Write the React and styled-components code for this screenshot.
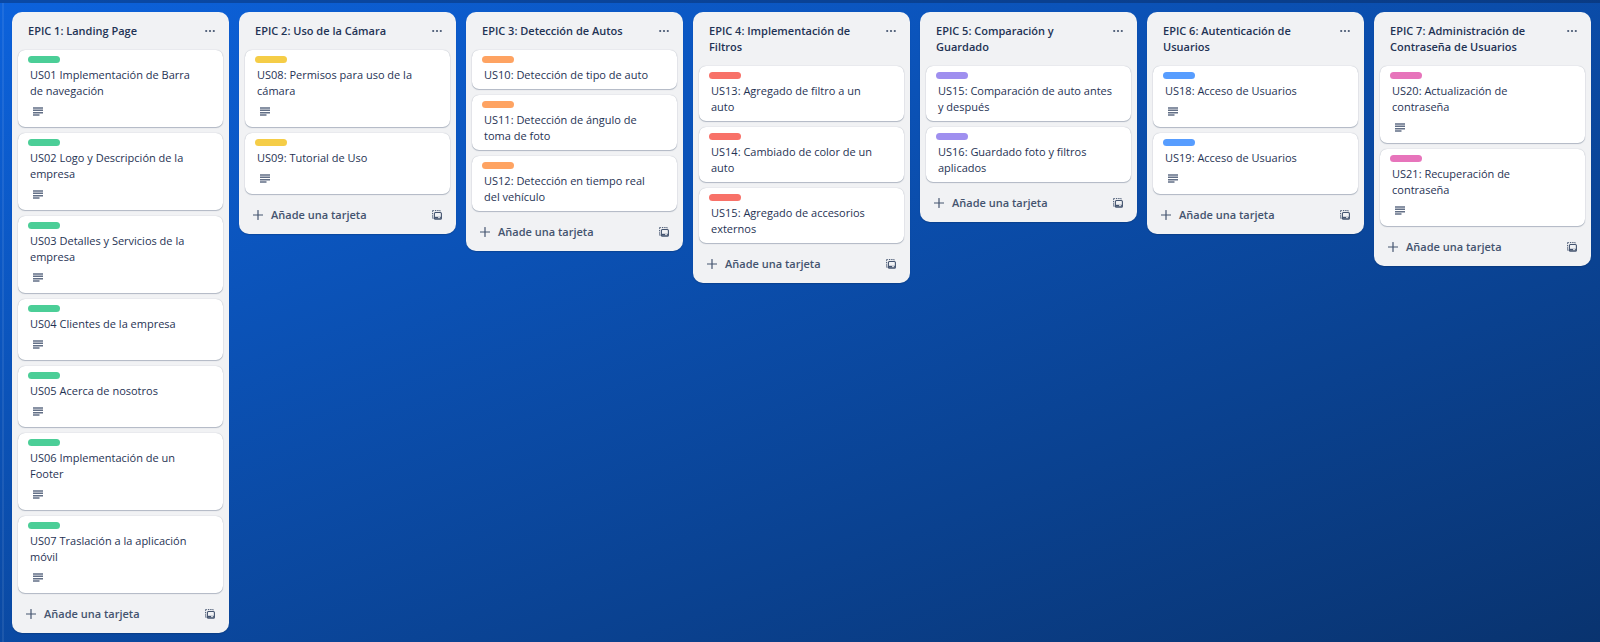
import React from "react";
import styled, { createGlobalStyle } from "styled-components";

const GlobalStyle = createGlobalStyle`
  *, *::before, *::after { box-sizing: border-box; }
  html { height: 100%; }
  body {
    margin: 0;
    min-height: 100%;
    font-family: "Open Sans", "Noto Sans", sans-serif;
    font-size: 11px;
    line-height: 16px;
    color: #1f3354;
    background: linear-gradient(160deg, #0c62dc 0%, #09326c 103%) no-repeat #09326c;
  }
  h2, h3, ul { margin: 0; padding: 0; font: inherit; }
  ul { list-style: none; }
`;

const Page = styled.div`
  display: flex;
  flex-direction: column;
  min-height: 100vh;
`;

const TopEdge = styled.div`
  height: 3px;
  background: rgba(9, 30, 66, 0.35);
`;

const Board = styled.main`
  flex: 1;
  margin-left: 2px;
  padding: 9px 9px 9px 8px;
  border-left: 2px solid rgba(255, 255, 255, 0.08);
`;

const Lists = styled.div`
  display: grid;
  grid-template-columns: repeat(7, minmax(200px, 1fr));
  align-items: start;
  gap: 10px;
`;

const List = styled.section`
  padding: 0 6px;
  border-radius: 10px;
  background: #f1f2f4;
  box-shadow: 0 1px 1px rgba(9, 30, 66, 0.25);
`;

const ListHeader = styled.header`
  display: flex;
  align-items: flex-start;
  justify-content: space-between;
  gap: 8px;
  padding: 11px 1px 11px 10px;
`;

const ListTitle = styled.h2`
  flex: 1;
  && { font-weight: 600; }
`;

const IconButton = styled.button`
  display: grid;
  place-items: center;
  width: 24px;
  height: 16px;
  padding: 0;
  border: 0;
  background: none;
  color: #44546f;
  cursor: pointer;
`;

const Cards = styled.ul`
  display: flex;
  flex-direction: column;
  gap: 6px;
`;

const Card = styled.li`
  padding: 6px 10px;
  border-radius: 7px;
  background: #fff;
  box-shadow: 0 1px 1px rgba(9, 30, 66, 0.25), 0 0 1px rgba(9, 30, 66, 0.31);
`;

const Label = styled.div`
  width: 32px;
  height: 7px;
  margin-bottom: 4px;
  border-radius: 4px;
  background: ${(p) => p.$color};
`;

const CardTitle = styled.h3`
  white-space: pre-line;
  && { padding: 0 5px 0 2px; }
`;

const Badge = styled.div`
  display: flex;
  align-items: center;
  height: 16px;
  margin: 4px 0 2px;
  padding-left: 5px;
  color: #626f86;
`;

const ListFooter = styled.footer`
  display: flex;
  align-items: center;
  justify-content: space-between;
  height: 40px;
  padding: 2px 1px 0 8px;
`;

const AddButton = styled.button`
  display: flex;
  align-items: center;
  gap: 8px;
  padding: 0;
  border: 0;
  background: none;
  color: #44546f;
  font: inherit;
  font-weight: 600;
  cursor: pointer;
`;

const DotsIcon = () => (
  <svg width="10" height="4" viewBox="0 0 10 4" fill="currentColor" aria-hidden="true">
    <circle cx="1.2" cy="2" r="1.1" />
    <circle cx="5" cy="2" r="1.1" />
    <circle cx="8.8" cy="2" r="1.1" />
  </svg>
);

const TextIcon = () => (
  <svg width="10" height="9" viewBox="0 0 10 9" fill="currentColor" aria-hidden="true">
    <path d="M0 .3h10v1.5H0zM0 2.6h10v1.5H0zM0 4.9h10v1.5H0zM0 7.2h6.5v1.5H0z" />
  </svg>
);

const PlusIcon = () => (
  <svg width="10" height="10" viewBox="0 0 10 10" stroke="currentColor" strokeWidth="1.2" strokeLinecap="round" aria-hidden="true">
    <path d="M5 .5v9M.5 5h9" />
  </svg>
);

const TemplateIcon = () => (
  <svg width="10" height="10" viewBox="0 0 10 10" fill="none" stroke="currentColor" aria-hidden="true">
    <path d="M.6 1.8V.6h1.2M2.9.6h1.4M5.2.6h1.4M7.4.6h.8v.7M.6 2.9v1.4M.6 5.3v1.4M.6 7.4v.8h.9" strokeWidth="1" />
    <rect x="2.4" y="2.5" width="7" height="6.8" rx="1" strokeWidth="1.1" />
    <path d="M2.6 7.8h6.6" strokeWidth="2" />
    <path d="M6 7.6h2.2" stroke="#f1f2f4" strokeWidth=".9" />
  </svg>
);

const lists = [
  {
    title: "EPIC 1: Landing Page",
    color: "#4bce97",
    cards: [
      ["US01 Implementación de Barra\nde navegación", true],
      ["US02 Logo y Descripción de la empresa", true],
      ["US03 Detalles y Servicios de la empresa", true],
      ["US04 Clientes de la empresa", true],
      ["US05 Acerca de nosotros", true],
      ["US06 Implementación de un Footer", true],
      ["US07 Traslación a la aplicación móvil", true],
    ],
  },
  {
    title: "EPIC 2: Uso de la Cámara",
    color: "#f5cd47",
    cards: [
      ["US08: Permisos para uso de la cámara", true],
      ["US09: Tutorial de Uso", true],
    ],
  },
  {
    title: "EPIC 3: Detección de Autos",
    color: "#fea362",
    cards: [
      ["US10: Detección de tipo de auto", false],
      ["US11: Detección de ángulo de\ntoma de foto", false],
      ["US12: Detección en tiempo real\ndel vehículo", false],
    ],
  },
  {
    title: "EPIC 4: Implementación de Filtros",
    color: "#f87168",
    cards: [
      ["US13: Agregado de filtro a un\nauto", false],
      ["US14: Cambiado de color de un\nauto", false],
      ["US15: Agregado de accesorios externos", false],
    ],
  },
  {
    title: "EPIC 5: Comparación y Guardado",
    color: "#9f8fef",
    cards: [
      ["US15: Comparación de auto antes\ny después", false],
      ["US16: Guardado foto y filtros aplicados", false],
    ],
  },
  {
    title: "EPIC 6: Autenticación de Usuarios",
    color: "#579dff",
    cards: [
      ["US18: Acceso de Usuarios", true],
      ["US19: Acceso de Usuarios", true],
    ],
  },
  {
    title: "EPIC 7: Administración de Contraseña de Usuarios",
    color: "#e774bb",
    cards: [
      ["US20: Actualización de\ncontraseña", true],
      ["US21: Recuperación de\ncontraseña", true],
    ],
  },
];

export default function App() {
  return (
    <Page>
      <GlobalStyle />
      <TopEdge />
      <Board>
        <Lists>
          {lists.map((list) => (
            <List key={list.title}>
              <ListHeader>
                <ListTitle>{list.title}</ListTitle>
                <IconButton type="button" aria-label="Acciones de la lista">
                  <DotsIcon />
                </IconButton>
              </ListHeader>
              <Cards>
                {list.cards.map(([title, described]) => (
                  <Card key={title}>
                    <Label $color={list.color} />
                    <CardTitle>{title}</CardTitle>
                    {described && (
                      <Badge>
                        <TextIcon />
                      </Badge>
                    )}
                  </Card>
                ))}
              </Cards>
              <ListFooter>
                <AddButton type="button">
                  <PlusIcon />
                  Añade una tarjeta
                </AddButton>
                <IconButton type="button" aria-label="Crear desde plantilla">
                  <TemplateIcon />
                </IconButton>
              </ListFooter>
            </List>
          ))}
        </Lists>
      </Board>
    </Page>
  );
}
